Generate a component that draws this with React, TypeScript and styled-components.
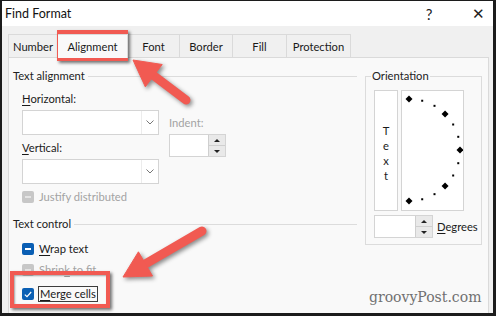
import React, { FC } from 'react'
import styled, { createGlobalStyle } from 'styled-components'

const GlobalStyle = createGlobalStyle`
    html, body {
        margin: 0;
        padding: 0;
        background: #1c1c1c;
    }
`;

const Frame = styled.div`
    position: relative;
    width: 496px;
    height: 316px;
    box-sizing: border-box;
    border-style: solid;
    border-color: #1c1c1c;
    border-width: 1px 3px 3px 2px;
    background: #f0f0f0;
    display: flex;
    flex-direction: column;
    overflow: hidden;
    font-family: Lato, "Noto Sans", sans-serif;
    font-size: 11.2px;
    color: #1a1a1a;
`;

const TitleBar = styled.div`
    height: 25px;
    flex: none;
    background: #fff;
    display: flex;
    align-items: center;
    padding-left: 3px;
`;

const Title = styled.div`
    flex: 1;
    font-size: 12.5px;
    color: #111;
`;

const TitleButton = styled.div<{ gap?: number }>`
    width: 30px;
    text-align: center;
    font-size: 15px;
    color: #222;
    margin-right: ${p => p.gap || 0}px;
`;

const TabStrip = styled.div`
    display: flex;
    padding: 8px 0 0 6px;
    height: 23px;
    flex: none;
`;

const Tab = styled.div<{ w: number, active?: boolean }>`
    width: ${p => p.w}px;
    box-sizing: border-box;
    display: flex;
    align-items: center;
    justify-content: center;
    border: 1px solid #dadada;
    border-left: none;
    border-bottom: none;
    background: ${p => p.active ? '#f9f9f9' : '#f0f0f0'};
    position: relative;
    z-index: ${p => p.active ? 2 : 0};
    height: ${p => p.active ? 24 : 23}px;
    &:first-child {
        border-left: 1px solid #dadada;
    }
`;

const Panel = styled.div`
    flex: 1;
    margin: 0 4px 0 6px;
    border: 1px solid #dadada;
    border-bottom: none;
    background: #f9f9f9;
    display: grid;
    grid-template-columns: 344px 117px;
    column-gap: 8px;
    padding-left: 4px;
    align-items: start;
`;

const Column = styled.div`
    display: flex;
    flex-direction: column;
`;

const GroupHeader = styled.div<{ top: number }>`
    display: flex;
    align-items: center;
    line-height: 16px;
    margin-top: ${p => p.top}px;
    color: #222;
    &::after {
        content: "";
        flex: 1;
        height: 1px;
        background: #dcdcdc;
        margin-left: 3px;
    }
`;

const Indented = styled.div`
    display: flex;
    flex-direction: column;
    padding-left: 9px;
`;

const Label = styled.div<{ top?: number, disabled?: boolean }>`
    line-height: 16px;
    margin-top: ${p => p.top || 0}px;
    color: ${p => p.disabled ? '#a3a3a3' : '#1a1a1a'};
`;

const Key = styled.span`
    text-decoration: underline;
    text-underline-offset: 2px;
`;

const AlignRow = styled.div`
    display: flex;
    gap: 10px;
`;

const Combo = styled.div<{ top: number }>`
    width: 137px;
    height: 25px;
    margin-top: ${p => p.top}px;
    box-sizing: border-box;
    border: 1px solid #d4d4d4;
    background: #fff;
    display: flex;
    justify-content: flex-end;
`;

const ComboArrow = styled.div`
    width: 16px;
    border-left: 1px solid #ececec;
    display: flex;
    align-items: center;
    justify-content: center;
`;

const Spin = styled.div<{ w: number, top?: number }>`
    width: ${p => p.w}px;
    height: 23px;
    margin-top: ${p => p.top || 0}px;
    box-sizing: border-box;
    border: 1px solid #d4d4d4;
    background: #fff;
    display: flex;
    justify-content: flex-end;
    flex: none;
`;

const SpinButtons = styled.div`
    width: 16px;
    display: flex;
    flex-direction: column;
    border-left: 1px solid #cfcfcf;
`;

const SpinButton = styled.div<{ down?: boolean }>`
    flex: 1;
    background: #e9e9e9;
    border-top: ${p => p.down ? '1px solid #cfcfcf' : 'none'};
    display: flex;
    align-items: center;
    justify-content: center;
    &::before {
        content: "";
        border-left: 3px solid transparent;
        border-right: 3px solid transparent;
        ${p => p.down ? 'border-top: 3px solid #222;' : 'border-bottom: 3px solid #222;'}
    }
`;

const CheckRow = styled.div<{ top: number }>`
    display: flex;
    align-items: center;
    height: 16px;
    margin-top: ${p => p.top}px;
`;

type CheckState = 'checked' | 'mixed' | 'off'

const Box = styled.div<{ state: CheckState, disabled?: boolean }>`
    width: 12px;
    height: 12px;
    border-radius: 2px;
    margin-right: 5px;
    background: ${p => p.disabled ? '#c7c7c7' : '#0a5fb4'};
    display: flex;
    align-items: center;
    justify-content: center;
`;

const Dash = styled.div<{ disabled?: boolean }>`
    width: 6px;
    height: 2px;
    background: ${p => p.disabled ? '#e4e4e4' : '#fff'};
`;

const FocusText = styled.span`
    outline: 1px solid #3c3c3c;
    padding: 0 1px;
    line-height: 14px;
`;

const Fieldset = styled.fieldset`
    margin: 10px 0 0 0;
    padding: 6px 8px 4px 8px;
    border: 1px solid #dcdcdc;
    min-width: 0;
    height: 177px;
    box-sizing: border-box;
`;

const Legend = styled.legend`
    padding: 0 1px;
    margin-left: -3px;
    line-height: 16px;
    color: #222;
`;

const OrientRow = styled.div`
    display: flex;
    gap: 3px;
    height: 121px;
`;

const VerticalText = styled.div`
    width: 24px;
    box-sizing: border-box;
    border: 1px solid #d4d4d4;
    background: #fff;
    display: flex;
    flex-direction: column;
    align-items: center;
    justify-content: center;
    line-height: 15px;
    padding-top: 4px;
`;

const Dial = styled.div`
    width: 63px;
    box-sizing: border-box;
    border: 1px solid #d4d4d4;
    background: #fff;
`;

const DegreesRow = styled.div`
    display: flex;
    align-items: center;
    gap: 4px;
    margin-top: 4px;
`;

const Overlay = styled.div`
    position: absolute;
    top: -1px;
    left: -2px;
    width: 496px;
    height: 316px;
    pointer-events: none;
`;

const RedBox = styled.div<{ x: number, y: number, w: number, h: number }>`
    position: absolute;
    left: ${p => p.x}px;
    top: ${p => p.y}px;
    width: ${p => p.w}px;
    height: ${p => p.h}px;
    box-sizing: border-box;
    border: 4px solid #f15a52;
    box-shadow: 2px 2px 3px rgba(0, 0, 0, 0.55), inset 1px 1px 2px rgba(0, 0, 0, 0.35);
`;

const ArrowLayer = styled.svg`
    position: absolute;
    left: 0;
    top: 0;
    filter: drop-shadow(2px 2px 2px rgba(0, 0, 0, 0.45));
`;

const Watermark = styled.div`
    position: absolute;
    left: 369px;
    top: 289px;
    font-family: "DejaVu Serif", "Liberation Serif", serif;
    font-size: 14px;
    color: #707070;
`;

const Chevron = () => (
    <svg width="8" height="5" viewBox="0 0 8 5">
        <path d="M0.5 0.5 L4 4 L7.5 0.5" fill="none" stroke="#777" strokeWidth="1" />
    </svg>
)

const Check: FC<{ state: CheckState, disabled?: boolean }> = ({ state, disabled }) => (
    <Box state={state} disabled={disabled}>
        {state === 'mixed' && <Dash disabled={disabled} />}
        {state === 'checked' && (
            <svg width="8" height="7" viewBox="0 0 8 7">
                <path d="M0.8 3.6 L3 5.6 L7.2 1" fill="none" stroke="#fff" strokeWidth="1.2" />
            </svg>
        )}
    </Box>
)

const SpinBox: FC<{ w: number, top?: number }> = ({ w, top }) => (
    <Spin w={w} top={top}>
        <SpinButtons>
            <SpinButton />
            <SpinButton down />
        </SpinButtons>
    </Spin>
)

// dial dots: every 15 degrees on a half circle, bigger every 45
const dialDots = Array.from({ length: 13 }, (_, i) => {
    const a = (90 - i * 15) * Math.PI / 180
    return { x: 7 + 51 * Math.cos(a), y: 59 - 51 * Math.sin(a), big: i % 3 === 0 }
})

const arrowShape = (tail: [number, number], tip: [number, number]) => {
    const dx = tip[0] - tail[0]
    const dy = tip[1] - tail[1]
    const len = Math.hypot(dx, dy)
    const ux = dx / len
    const uy = dy / len
    const bx = tip[0] - ux * 26
    const by = tip[1] - uy * 26
    const w = 14
    return {
        shaft: `M${tail[0]} ${tail[1]} L${bx + ux * 4} ${by + uy * 4}`,
        head: `M${tip[0]} ${tip[1]} L${bx - uy * w} ${by + ux * w} L${bx + uy * w} ${by - ux * w} Z`,
    }
}

const arrows = [
    arrowShape([186, 100], [133, 60]),
    arrowShape([202, 231], [123, 277]),
]

const App: FC = () => {
    return (
        <>
            <GlobalStyle />
            <Frame>
                <TitleBar>
                    <Title>Find Format</Title>
                    <TitleButton gap={19}>?</TitleButton>
                    <TitleButton>✕</TitleButton>
                </TitleBar>
                <TabStrip>
                    <Tab w={50}>Number</Tab>
                    <Tab w={70} active>Alignment</Tab>
                    <Tab w={52}>Font</Tab>
                    <Tab w={53}>Border</Tab>
                    <Tab w={54}>Fill</Tab>
                    <Tab w={64}>Protection</Tab>
                </TabStrip>
                <Panel>
                    <Column>
                        <GroupHeader top={10}>Text alignment</GroupHeader>
                        <Indented>
                            <AlignRow>
                                <Column>
                                    <Label top={7}><Key>H</Key>orizontal:</Label>
                                    <Combo top={3}><ComboArrow><Chevron /></ComboArrow></Combo>
                                    <Label top={5}><Key>V</Key>ertical:</Label>
                                    <Combo top={3}><ComboArrow><Chevron /></ComboArrow></Combo>
                                </Column>
                                <Column>
                                    <Label top={31} disabled>Indent:</Label>
                                    <SpinBox w={57} top={3} />
                                </Column>
                            </AlignRow>
                            <CheckRow top={5}>
                                <Check state="mixed" disabled />
                                <Label disabled>Justify distributed</Label>
                            </CheckRow>
                        </Indented>
                        <GroupHeader top={11}>Text control</GroupHeader>
                        <Indented>
                            <CheckRow top={9}>
                                <Check state="mixed" />
                                <Label><Key>W</Key>rap text</Label>
                            </CheckRow>
                            <CheckRow top={5}>
                                <Check state="mixed" disabled />
                                <Label disabled>Shrin<Key>k</Key> to fit</Label>
                            </CheckRow>
                            <CheckRow top={8}>
                                <Check state="checked" />
                                <FocusText><Key>M</Key>erge cells</FocusText>
                            </CheckRow>
                        </Indented>
                    </Column>
                    <Fieldset>
                        <Legend>Orientation</Legend>
                        <OrientRow>
                            <VerticalText>
                                <span>T</span>
                                <span>e</span>
                                <span>x</span>
                                <span>t</span>
                            </VerticalText>
                            <Dial>
                                <svg width="61" height="119" viewBox="0 0 61 119">
                                    {dialDots.map((d, i) => d.big
                                        ? <path key={i} d={`M${d.x} ${d.y - 3.5} L${d.x + 3.5} ${d.y} L${d.x} ${d.y + 3.5} L${d.x - 3.5} ${d.y} Z`} fill="#000" />
                                        : <rect key={i} x={d.x - 1} y={d.y - 1} width="2" height="2" fill="#000" />
                                    )}
                                </svg>
                            </Dial>
                        </OrientRow>
                        <DegreesRow>
                            <SpinBox w={59} />
                            <Label><Key>D</Key>egrees</Label>
                        </DegreesRow>
                    </Fieldset>
                </Panel>
                <Overlay>
                    <RedBox x={57} y={30} w={71} h={31} />
                    <RedBox x={10} y={271} w={100} h={37} />
                    <ArrowLayer width="496" height="316" viewBox="0 0 496 316">
                        {arrows.map((a, i) => (
                            <g key={i} fill="#f15a52" stroke="#f15a52">
                                <path d={a.shaft} strokeWidth="9" strokeLinecap="round" fill="none" />
                                <path d={a.head} strokeWidth="1" strokeLinejoin="round" />
                            </g>
                        ))}
                    </ArrowLayer>
                    <Watermark>groovyPost.com</Watermark>
                </Overlay>
            </Frame>
        </>
    )
}

export default App
